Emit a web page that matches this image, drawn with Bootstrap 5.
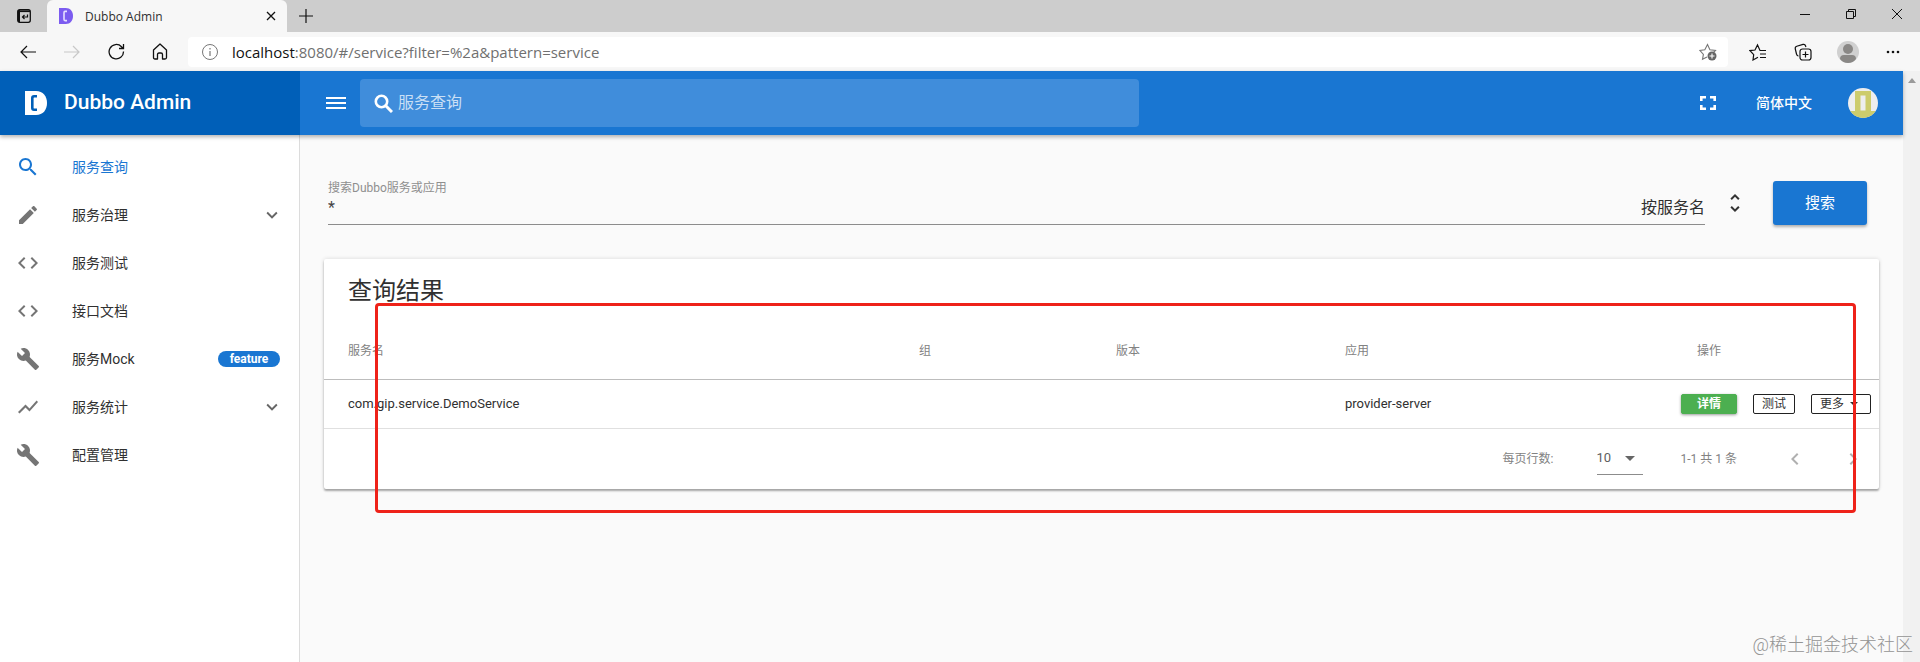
<!DOCTYPE html>
<html lang="zh-CN">
<head>
<meta charset="utf-8">
<meta name="viewport" content="width=device-width, initial-scale=1">
<title>Dubbo Admin</title>
<link href="https://cdn.jsdelivr.net/npm/bootstrap@5.3.0/dist/css/bootstrap.min.css" rel="stylesheet">
<style>
  body { font-family: Roboto, "Noto Sans CJK SC", sans-serif; font-size: 14px; color: #303030; background: #fafafa; overflow: hidden; }
  svg { display: block; flex: none; }
  button { color: inherit; }
  .plain-btn { background: none; border: 0; padding: 0; display: flex; align-items: center; justify-content: center; }

  /* browser chrome */
  .tab-strip { height: 32px; background: #cdcdcd; }
  .strip-btn { width: 47px; height: 32px; }
  .browser-tab { width: 240px; height: 32px; background: #f7f7f7; border-radius: 6px 6px 0 0; padding: 0 10px 0 12px; font: 12px "Open Sans", "Noto Sans", sans-serif; }
  .win-btn { width: 46px; height: 28px; }
  .tool-bar { height: 39px; background: #f7f7f7; padding: 0 5px 0 6px; }
  .tool-btn { width: 44px; height: 30px; }
  .side-tool { width: 45px; height: 30px; }
  .address { height: 30px; background: #fff; border-radius: 4px; padding: 0 11px 0 14px; margin-left: 6px; margin-right: 7px; }
  .address-text { font: 15px/28px "Open Sans", "Noto Sans", sans-serif; color: #707070; margin-left: 14px; }
  .address-text b { font-weight: 400; color: #111; }

  /* application bar */
  .app-bar { height: 64px; background: #1976d2; color: #fff; box-shadow: 0 2px 4px rgba(0,0,0,.3); z-index: 3; position: relative; }
  .brand { width: 300px; background: #005fb8; padding-left: 25px; gap: 17px; font-size: 21px; font-weight: 500; color: #fff; text-decoration: none; }
  .menu-btn { width: 60px; padding-left: 12px; }
  .bar-search { width: 779px; height: 48px; background: #408ddb; border-radius: 4px; padding: 0 14px; gap: 5px; }
  .bar-search input { background: none; border: 0; outline: 0; color: #fff; font-size: 16px; padding: 0; }
  .bar-search input::placeholder { color: #c9dff5; opacity: 1; }
  .bar-tools { gap: 36px; padding-right: 25px; }

  /* navigation drawer */
  .drawer { width: 300px; background: #fff; border-right: 1px solid #dcdcdc; padding-top: 8px; }
  .drawer a { height: 48px; padding: 0 16px; color: #303030; text-decoration: none; }
  .drawer a > svg:first-child { color: #757575; margin-right: 32px; }
  .drawer a.active, .drawer a.active > svg:first-child { color: #1976d2; }
  .drawer .badge { width: 62px; height: 16px; padding: 0; line-height: 16px; font-size: 12px; font-weight: 700; background: #1976d2; margin-right: 3px; }

  /* content */
  .content { padding: 46px 24px 0; }
  .search-form { padding: 0 12px 0 4px; }
  .field { border-bottom: 1px solid #8c8c8c; height: 44px; padding-bottom: 4px; }
  .field label { font-size: 12px; line-height: 16px; color: #8f8f8f; }
  .field input { border: 0; background: none; outline: 0; padding: 0; height: 24px; line-height: 24px; font-size: 16px; color: #444; }
  .field-suffix { font-size: 16px; line-height: 24px; }
  .sort-btn { width: 60px; height: 44px; }
  .submit-btn { width: 94px; height: 44px; margin-left: 8px; border-radius: 3px; background: #1976d2; color: #fff; font-size: 15px; box-shadow: 0 2px 3px rgba(0,0,0,.3); }
  .submit-btn:hover { background: #1565c0; color: #fff; }
  .result-card { margin-top: 34px; background: #fff; border-radius: 2px; box-shadow: 0 2px 2px rgba(0,0,0,.3), 0 0 4px rgba(0,0,0,.14); }
  .result-title { font-size: 24px; line-height: 32px; padding: 16px 24px; margin: 0; }
  .result-table { table-layout: fixed; width: 100%; }
  .result-table th { height: 56px; padding: 0 24px; font-size: 12px; font-weight: 400; color: #828282; border-bottom: 1px solid #bdbdbd; }
  .result-table th:last-child { padding-left: 40px; }
  .result-table td { height: 49px; padding: 0 0 0 24px; font-size: 13px; border-bottom: 1px solid #e0e0e0; }
  .c-group { width: 197px; } .c-version { width: 229px; } .c-app { width: 336px; } .c-action { width: 222px; }
  .row-btn { height: 20px; padding: 0; font-size: 12px; line-height: 18px; border-radius: 2px; border: 1px solid #212121; background: #fff; }
  .row-btn.detail { width: 56px; background: #4caf50; border-color: #4caf50; color: #fff; font-weight: 700; box-shadow: 0 1px 3px rgba(0,0,0,.4); }
  .row-btn.test { width: 42px; }
  .row-btn.more { width: 60px; text-align: left; padding-left: 8px; }
  .row-btn.more::after { margin-left: 6px; vertical-align: 2px; border-top-width: 4px; border-left-width: 4px; border-right-width: 4px; }
  .pager { height: 60px; font-size: 12px; color: #828282; padding-right: 14px; }
  .page-size { width: 46px; height: 33px; margin: 0 38px 0 43px; border: 0; border-bottom: 1px solid #8c8c8c; appearance: none; padding: 0; font-size: 13px; color: #606060; background: url("data:image/svg+xml,%3Csvg xmlns='http://www.w3.org/2000/svg' width='10' height='5'%3E%3Cpath d='M0 0h10L5 5z' fill='%23666'/%3E%3C/svg%3E") no-repeat right 8px top 14px; }
  .page-btns { gap: 34px; margin-left: 46px; }
  .page-btn { width: 24px; height: 24px; color: #b0b0b0; }
  .highlight { position: absolute; top: 44px; left: 51px; right: 23px; bottom: -24px; border: 3px solid #ee2219; border-radius: 4px; pointer-events: none; }
  .scroll-track { width: 17px; background: #f1f1f1; padding-top: 7px; }
  .watermark { position: absolute; right: 7px; bottom: 3px; font-size: 18px; line-height: 28px; font-weight: 300; color: #949494; z-index: 4; }
</style>
</head>
<body class="vh-100 d-flex flex-column">
<svg class="d-none">
  <symbol id="search" viewBox="0 0 24 24"><path fill="currentColor" d="M15.5 14h-.79l-.28-.27C15.41 12.59 16 11.11 16 9.5 16 5.91 13.09 3 9.5 3S3 5.91 3 9.5 5.91 16 9.5 16c1.61 0 3.09-.59 4.23-1.57l.27.28v.79l5 4.99L20.49 19l-4.99-5zm-6 0C7.01 14 5 11.99 5 9.5S7.01 5 9.5 5 14 7.01 14 9.5 11.99 14 9.5 14z"/></symbol>
  <symbol id="edit" viewBox="0 0 24 24"><path fill="currentColor" d="M3 17.25V21h3.75L17.81 9.94l-3.75-3.75L3 17.25zM20.71 7.04c.39-.39.39-1.02 0-1.41l-2.34-2.34c-.39-.39-1.02-.39-1.41 0l-1.83 1.83 3.75 3.75 1.83-1.83z"/></symbol>
  <symbol id="code" viewBox="0 0 24 24"><path fill="currentColor" d="M9.4 16.6L4.8 12l4.6-4.6L8 6l-6 6 6 6 1.4-1.4zm5.2 0l4.6-4.6-4.6-4.6L16 6l6 6-6 6-1.4-1.4z"/></symbol>
  <symbol id="build" viewBox="0 0 24 24"><path fill="currentColor" d="M22.7 19l-9.1-9.1c.9-2.3.4-5-1.5-6.9-2-2-5-2.4-7.4-1.3L9 6 6 9 1.6 4.7C.4 7.1.9 10.1 2.9 12.1c1.9 1.9 4.6 2.4 6.9 1.5l9.1 9.1c.4.4 1 .4 1.4 0l2.3-2.3c.5-.4.5-1.1.1-1.4z"/></symbol>
  <symbol id="chart" viewBox="0 0 24 24"><path fill="currentColor" d="M3.5 18.49l6-6.01 4 4L22 6.92l-1.41-1.41-7.09 7.97-4-4L2 16.99z"/></symbol>
  <symbol id="down" viewBox="0 0 24 24"><path fill="currentColor" d="M16.59 8.59L12 13.17 7.41 8.59 6 10l6 6 6-6z"/></symbol>
</svg>

<header class="flex-shrink-0">
  <div class="tab-strip d-flex">
    <button class="plain-btn strip-btn" aria-label="标签操作"><svg width="14" height="14" viewBox="0 0 14 14" fill="none" stroke="#111"><rect x=".7" y=".7" width="12.600" height="12.600" rx="2" stroke-width="1.300"/><path d="M1 2.200h12" stroke-width="1.800"/><path d="M2 1v12" stroke-width="2"/><path d="M10.500 5.500v2.500H5.500M7.500 6l-2 2 2 2" stroke-width="1.200"/></svg></button>
    <div class="browser-tab d-flex align-items-center">
      <svg width="14" height="16" viewBox="0 0 21 24"><path fill="#7c5cf0" d="M0 0h10c7 0 11 5 11 12s-4 12-11 12H0z"/><path fill="none" stroke="#e6dfff" stroke-width="2.400" d="M12 5H9Q7.500 5 7.500 7v10q0 2 1.500 2h3"/></svg>
      <span class="ms-2 ps-1 flex-fill">Dubbo Admin</span>
      <button class="plain-btn" aria-label="关闭标签"><svg width="12" height="12" viewBox="0 0 12 12" stroke="#111" stroke-width="1.300"><path d="M2 2l8 8M10 2l-8 8"/></svg></button>
    </div>
    <button class="plain-btn px-2 ms-1" aria-label="新建标签"><svg width="14" height="14" viewBox="0 0 14 14" stroke="#111" stroke-width="1.200"><path d="M7 0v14M0 7h14"/></svg></button>
    <div class="d-flex ms-auto">
      <button class="plain-btn win-btn" aria-label="最小化"><svg width="10" height="10" stroke="#111"><path d="M0 5.500h10"/></svg></button>
      <button class="plain-btn win-btn" aria-label="还原"><svg width="10" height="10" fill="none" stroke="#111"><path d="M.5 2.500h7v7h-7zM2.500 2.500v-2h7v7h-2"/></svg></button>
      <button class="plain-btn win-btn" aria-label="关闭"><svg width="10" height="10" stroke="#111"><path d="M0 0l10 10M10 0L0 10"/></svg></button>
    </div>
  </div>
  <div class="tool-bar d-flex align-items-center">
    <button class="plain-btn tool-btn" aria-label="后退"><svg width="16" height="14" viewBox="0 0 16 14" fill="none" stroke="#111" stroke-width="1.200"><path d="M16 7H1M7 1L1 7l6 6"/></svg></button>
    <button class="plain-btn tool-btn" aria-label="前进"><svg width="16" height="14" viewBox="0 0 16 14" fill="none" stroke="#c8c8c8" stroke-width="1.200"><path d="M0 7h15M9 1l6 6-6 6"/></svg></button>
    <button class="plain-btn tool-btn" aria-label="刷新"><svg width="17" height="17" viewBox="0 0 17 17" fill="none" stroke="#111" stroke-width="1.300"><path d="M15.500 8.500A7.200 7.200 0 1 1 13.500 3.700L15 5.200M15.500 1v4.500H11"/></svg></button>
    <button class="plain-btn tool-btn" aria-label="主页"><svg width="16" height="17" viewBox="0 0 16 17" fill="none" stroke="#111" stroke-width="1.300" stroke-linejoin="round"><path d="M1.500 7L8 1l6.500 6v7.500q0 1.500-1.500 1.500h-2.500v-4.500q0-1.500-1.500-1.500H7q-1.500 0-1.500 1.500V16H3q-1.500 0-1.500-1.500z"/></svg></button>
    <div class="address d-flex align-items-center flex-fill">
      <svg width="16" height="16" viewBox="0 0 16 16" fill="none" stroke="#777"><circle cx="8" cy="8" r="7.500"/><path d="M8 7v5M8 4v1.500" stroke-width="1.200"/></svg>
      <span class="address-text flex-fill"><b>localhost</b>:8080/#/service?filter=%2a&amp;pattern=service</span>
      <button class="plain-btn" aria-label="收藏此页"><svg width="18" height="18" viewBox="0 0 18 18" fill="none" stroke="#777" stroke-width="1.100"><path d="M8 14l-4.500 2.300.9-5L1 7.500l4.800-.7L8.500 1.500l2.400 5.300 5.600.7-2 2"/><circle cx="13" cy="13" r="4.500" fill="#666" stroke="none"/><path d="M13 10.500v5M10.500 13h5" stroke="#fff"/></svg></button>
    </div>
    <button class="plain-btn side-tool" aria-label="收藏夹"><svg width="18" height="18" viewBox="0 0 18 18" fill="none" stroke="#111" stroke-width="1.200"><path d="M17 7.500h-6L8.500 2 6 7 1 7.600l3.700 4L4 17l5-2.700M11 11h6M11 14.500h6"/></svg></button>
    <button class="plain-btn side-tool" aria-label="集锦"><svg width="18" height="18" viewBox="0 0 18 18" fill="none" stroke="#111" stroke-width="1.200"><path d="M4.500 13Q3 13 2.500 11L1.300 6Q.8 4 2.800 3.300L9 1.400q2-.5 2.600 1.600l.3 1"/><rect x="6" y="6" width="11" height="11" rx="2.500"/><path d="M11.500 8.500v6M8.500 11.500h6"/></svg></button>
    <button class="plain-btn side-tool" aria-label="用户"><svg width="22" height="22" viewBox="0 0 22 22"><circle cx="11" cy="11" r="11" fill="#d0d0d0"/><circle cx="11" cy="8" r="5" fill="#8a8886"/><path d="M3 18q0-4 4-4h8q4 0 4 4-3 4-8 4t-8-4z" fill="#8a8886"/></svg></button>
    <button class="plain-btn side-tool" aria-label="更多工具"><svg width="14" height="4" fill="#111"><circle cx="2" cy="2" r="1.300"/><circle cx="7" cy="2" r="1.300"/><circle cx="12" cy="2" r="1.300"/></svg></button>
  </div>
</header>

<div class="d-flex flex-fill">
  <div class="d-flex flex-column flex-fill">
    <nav class="app-bar d-flex align-items-center">
      <a href="#" class="brand d-flex align-items-center h-100">
        <svg width="22" height="24" viewBox="0 0 22 24"><path fill="#fff" d="M0 0h11c7 0 11 5 11 12s-4 12-11 12H0z"/><path fill="none" stroke="#005fb8" stroke-width="2.600" d="M12 5.300H9Q7.300 5.300 7.300 7v10q0 1.700 1.700 1.700h3"/></svg>
        Dubbo Admin</a>
      <button class="plain-btn menu-btn" aria-label="菜单"><svg width="20" height="12" fill="#fff"><path d="M0 0h20v2H0zM0 5h20v2H0zM0 10h20v2H0z"/></svg></button>
      <div class="bar-search d-flex align-items-center">
        <svg width="19" height="19" viewBox="0 0 19 19" fill="none" stroke="#fff" stroke-width="2.600"><circle cx="7.500" cy="7.500" r="5.700"/><path d="M11.500 11.500l6.500 6.500" stroke-width="3"/></svg>
        <input class="flex-fill" type="text" placeholder="服务查询" aria-label="服务查询">
      </div>
      <div class="bar-tools d-flex align-items-center ms-auto">
        <button class="plain-btn" aria-label="全屏"><svg width="24" height="14" viewBox="-2 0 24 14" fill="none" stroke="#fff" stroke-width="2.600"><path d="M3.300 5V1.300H8M12 1.300h4.700V5M3.300 9v3.700H8M12 12.700h4.700V9"/></svg></button>
        <button class="plain-btn fw-medium">简体中文</button>
        <button class="plain-btn" aria-label="账户"><svg width="30" height="30" viewBox="0 0 30 30"><clipPath id="round"><circle cx="15" cy="15" r="15"/></clipPath><g clip-path="url(#round)"><path fill="#eee" d="M0 0h30v30H0z"/><path fill="#cdcc6c" d="M7 3h16v20h7v7H0v-7h7z"/><path fill="#eee" d="M12.500 7.500h5v15h-5z"/></g></svg></button>
      </div>
    </nav>
    <div class="d-flex flex-fill">
      <aside class="drawer flex-shrink-0">
        <a href="#" class="d-flex align-items-center active"><svg width="24" height="24"><use href="#search"/></svg>服务查询</a>
        <a href="#" class="d-flex align-items-center"><svg width="24" height="24"><use href="#edit"/></svg>服务治理<svg class="ms-auto" width="22" height="22" color="#666"><use href="#down"/></svg></a>
        <a href="#" class="d-flex align-items-center"><svg width="24" height="24"><use href="#code"/></svg>服务测试</a>
        <a href="#" class="d-flex align-items-center"><svg width="24" height="24"><use href="#code"/></svg>接口文档</a>
        <a href="#" class="d-flex align-items-center"><svg width="24" height="24"><use href="#build"/></svg>服务Mock<span class="badge rounded-pill ms-auto">feature</span></a>
        <a href="#" class="d-flex align-items-center"><svg width="24" height="24"><use href="#chart"/></svg>服务统计<svg class="ms-auto" width="22" height="22" color="#666"><use href="#down"/></svg></a>
        <a href="#" class="d-flex align-items-center"><svg width="24" height="24"><use href="#build"/></svg>配置管理</a>
      </aside>
      <main class="content flex-fill">
        <form class="search-form d-flex align-items-center">
          <div class="field flex-fill d-flex align-items-end">
            <div class="flex-fill d-flex flex-column">
              <label for="filter">搜索Dubbo服务或应用</label>
              <input id="filter" type="text" value="*">
            </div>
            <span class="field-suffix">按服务名</span>
          </div>
          <button type="button" class="plain-btn sort-btn" aria-label="选择查询方式"><svg width="24" height="24" viewBox="0 0 24 24" fill="#333"><path d="M12 5.830L15.170 9l1.410-1.410L12 3 7.410 7.590 8.830 9 12 5.830zm0 12.340L8.830 15l-1.410 1.410L12 21l4.590-4.590L15.170 15 12 18.170z"/></svg></button>
          <button type="button" class="btn submit-btn">搜索</button>
        </form>
        <section class="result-card position-relative">
          <h1 class="result-title fw-normal">查询结果</h1>
          <table class="result-table">
            <colgroup><col><col class="c-group"><col class="c-version"><col class="c-app"><col class="c-action"></colgroup>
            <thead><tr><th>服务名</th><th>组</th><th>版本</th><th>应用</th><th>操作</th></tr></thead>
            <tbody><tr><td>com.gip.service.DemoService</td><td></td><td></td><td>provider-server</td>
              <td><div class="d-flex gap-3"><button class="row-btn detail">详情</button><button class="row-btn test">测试</button><button class="row-btn more dropdown-toggle">更多</button></div></td></tr></tbody>
          </table>
          <div class="pager d-flex align-items-center justify-content-end">
            <label for="size">每页行数:</label>
            <select id="size" class="page-size"><option>10</option></select>
            <span>1-1 共 1 条</span>
            <div class="page-btns d-flex">
              <button class="plain-btn page-btn" aria-label="上一页"><svg width="24" height="24" viewBox="0 0 24 24" fill="currentColor"><path d="M15.410 7.410L14 6l-6 6 6 6 1.410-1.410L10.830 12z"/></svg></button>
              <button class="plain-btn page-btn" aria-label="下一页"><svg width="24" height="24" viewBox="0 0 24 24" fill="currentColor"><path d="M10 6L8.590 7.410 13.170 12l-4.580 4.590L10 18l6-6z"/></svg></button>
            </div>
          </div>
          <div class="highlight"></div>
        </section>
      </main>
    </div>
  </div>
  <div class="scroll-track d-flex justify-content-center flex-shrink-0"><svg width="8" height="5" fill="#9a9a9a"><path d="M0 5l4-5 4 5z"/></svg></div>
</div>
<div class="watermark">@稀土掘金技术社区</div>
<script src="https://cdn.jsdelivr.net/npm/bootstrap@5.3.0/dist/js/bootstrap.bundle.min.js"></script>
</body>
</html>
